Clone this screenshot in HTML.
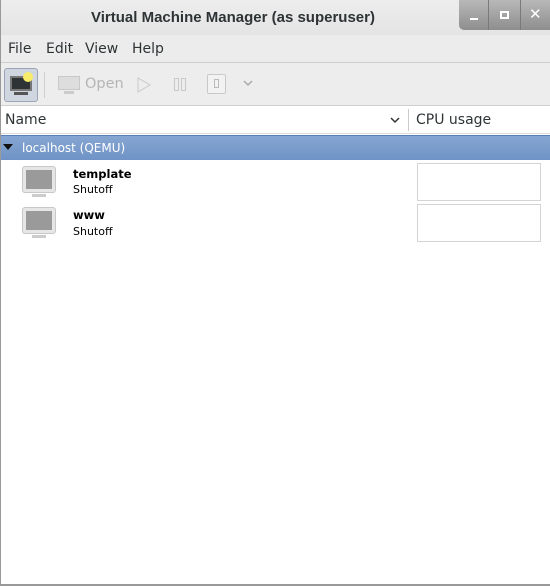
<!DOCTYPE html><html><head><style>
*{margin:0;padding:0;box-sizing:border-box}
body{width:550px;height:586px;overflow:hidden;background:#fff;font-family:"DejaVu Sans","Liberation Sans",sans-serif;position:relative;color:#2e3436}
.abs{position:absolute}
#title{left:0;top:0;width:550px;height:35px;background:linear-gradient(#ededed,#e4e4e4);font-size:15px;font-weight:bold;color:#2e3436;border-left:1px solid #999;font-family:"Liberation Sans",sans-serif}
#ctrl{left:459px;top:0;width:91px;height:30px;background:linear-gradient(#b8b8b8,#8e8e8e);border-radius:0 0 0 5px;color:#fff}
#menu{left:0;top:35px;width:550px;height:27px;background:#ececec;font-size:14px}
#tb{left:0;top:62px;width:550px;height:44px;background:#ededed;border-top:1px solid #cfcfcf;border-bottom:1px solid #cfcfcf}
#hdr{left:0;top:106px;width:550px;height:28px;background:#fff;font-size:14px;border-bottom:1px solid #dcdcdc}
#grp{left:0;top:135px;width:550px;height:25px;background:linear-gradient(#86a6d2,#6f93c6);color:#fff;font-size:12px;border-top:1px solid #5a7fb4}
.name{font-size:11.5px;font-weight:bold;color:#000}
.st{font-size:11px;color:#000}
.cpu{width:124px;height:38px;border:1px solid #d4d4d4;background:#fff}
</style></head><body>
<div id="title" class="abs"><span class="abs" style="left:90px;top:9px">Virtual Machine Manager (as superuser)</span></div>
<div id="ctrl" class="abs">
<div class="abs" style="left:29px;top:0;width:1px;height:30px;background:#7a7a7a"></div>
<div class="abs" style="left:61px;top:0;width:1px;height:30px;background:#7a7a7a"></div>
<div class="abs" style="left:11px;top:18px;width:8px;height:2px;background:#fff"></div>
<div class="abs" style="left:41px;top:11px;width:9px;height:8px;border:2px solid #fff"></div>
<span class="abs" style="left:70px;top:5px;font-size:15px;font-weight:bold">✕</span>
</div>
<div id="menu" class="abs">
<span class="abs" style="left:8px;top:6px">File</span>
<span class="abs" style="left:46px;top:6px">Edit</span>
<span class="abs" style="left:85px;top:6px">View</span>
<span class="abs" style="left:132px;top:6px">Help</span>
</div>
<div id="tb" class="abs">
<div class="abs" style="left:4px;top:5px;width:34px;height:34px;border:1px solid #9aa6b5;border-radius:3px;background:#cfd6e0"></div>
<div class="abs" style="left:10px;top:13px;width:22px;height:15px;background:#2e3436;border:2px solid #777"></div>
<div class="abs" style="left:14px;top:29px;width:14px;height:3px;background:#555"></div>
<div class="abs" style="left:23px;top:9px;width:10px;height:10px;border-radius:50%;background:#f7ec6a"></div>
<div class="abs" style="left:44px;top:9px;width:1px;height:26px;background:#cfcfcf"></div>
<div class="abs" style="left:58px;top:13px;width:22px;height:14px;background:#ddd;border:1px solid #c8c8c8"></div>
<div class="abs" style="left:64px;top:28px;width:10px;height:3px;background:#ccc"></div>
<span class="abs" style="left:85px;top:13px;font-size:14.5px;color:#b5b5b5">Open</span>
<svg class="abs" style="left:137px;top:14px" width="14" height="16"><path d="M1 1L13 8L1 15Z" fill="none" stroke="#c9c9c9"/></svg>
<div class="abs" style="left:174px;top:15px;width:5px;height:13px;border:1px solid #c9c9c9"></div>
<div class="abs" style="left:181px;top:15px;width:5px;height:13px;border:1px solid #c9c9c9"></div>
<div class="abs" style="left:207px;top:11px;width:19px;height:20px;border:1px solid #c9c9c9;border-radius:2px;background:#f2f2f2"></div>
<div class="abs" style="left:214px;top:16px;width:5px;height:9px;border:1px solid #bbb"></div>
<svg class="abs" style="left:243px;top:17px" width="10" height="7"><path d="M1 1L5 5L9 1" fill="none" stroke="#aaa" stroke-width="1.5"/></svg>
</div>
<div id="hdr" class="abs">
<span class="abs" style="left:5px;top:6px">Name</span>
<svg class="abs" style="left:390px;top:11px" width="10" height="7"><path d="M1 1L5 5L9 1" fill="none" stroke="#333" stroke-width="1.5"/></svg>
<div class="abs" style="left:408px;top:3px;width:1px;height:22px;background:#ccc"></div>
<span class="abs" style="left:416px;top:6px">CPU usage</span>
</div>
<div id="grp" class="abs">
<svg class="abs" style="left:3px;top:8px" width="10" height="7"><path d="M0 0H10L5 6Z" fill="#111"/></svg>
<span class="abs" style="left:22px;top:5px">localhost (QEMU)</span>
</div>
<div class="abs" style="left:23px;top:167px;width:32px;height:25px;background:#9a9a9a;border:3px solid #e6e6e6;border-radius:2px;box-shadow:0 0 0 1px #c8c8c8"></div>
<div class="abs" style="left:32px;top:194px;width:14px;height:3px;background:#ccc"></div>
<span class="abs name" style="left:73px;top:167px">template</span>
<span class="abs st" style="left:73px;top:183px">Shutoff</span>
<div class="abs cpu" style="left:417px;top:163px"></div>
<div class="abs" style="left:23px;top:208px;width:32px;height:25px;background:#9a9a9a;border:3px solid #e6e6e6;border-radius:2px;box-shadow:0 0 0 1px #c8c8c8"></div>
<div class="abs" style="left:32px;top:235px;width:14px;height:3px;background:#ccc"></div>
<span class="abs name" style="left:73px;top:208px">www</span>
<span class="abs st" style="left:73px;top:225px">Shutoff</span>
<div class="abs cpu" style="left:417px;top:204px"></div>
<div class="abs" style="left:0;top:584px;width:550px;height:2px;background:#999"></div>
<div class="abs" style="left:0;top:35px;width:1px;height:551px;background:#999"></div>
</body></html>
